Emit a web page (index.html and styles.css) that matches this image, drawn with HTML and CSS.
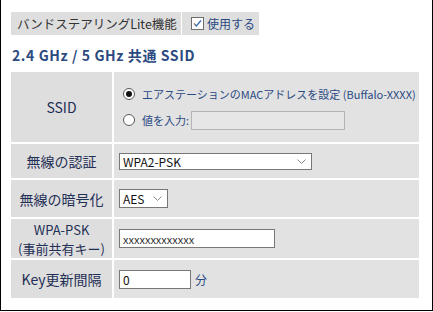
FILE: index.html
```html
<!DOCTYPE html>
<html lang="ja">
<head>
<meta charset="utf-8">
<link rel="stylesheet" href="styles.css">
</head>
<body>
<div class="frame">
  <div class="toggle-row">
    <div class="feature">バンドステアリングLite機能</div>
    <div class="use">
      <svg class="check" width="13" height="13" viewBox="0 0 13 13"><rect x="0.5" y="0.5" width="12" height="12" fill="#fff" stroke="#6e6e6e"/><path d="M3 6.5 L5.3 9 L10 3.5" fill="none" stroke="#3a6db5" stroke-width="1.3"/><path d="M3 6.5 L4 7.6" fill="none" stroke="#e0904a" stroke-width="1.3"/></svg>
      <span>使用する</span>
    </div>
  </div>
  <h2 class="title">2.4 GHz / 5 GHz 共通 SSID</h2>
  <div class="grid">
    <div class="lbl r1">SSID</div>
    <div class="val r1 ssid">
      <div class="opt"><span class="radio on"></span><span class="otext">エアステーションのMACアドレスを設定 (Buffalo-XXXX)</span></div>
      <div class="opt"><span class="radio"></span><span class="otext">値を入力:</span><span class="field"></span></div>
    </div>

    <div class="lbl r2">無線の認証</div>
    <div class="val r2"><div class="select wide"><span>WPA2-PSK</span><svg width="9" height="5" viewBox="0 0 9 5"><path d="M0.5 0.5 L4.5 4.5 L8.5 0.5" fill="none" stroke="#8a8a8a"/></svg></div></div>

    <div class="lbl r3">無線の暗号化</div>
    <div class="val r3"><div class="select small"><span>AES</span><svg width="9" height="5" viewBox="0 0 9 5"><path d="M0.5 0.5 L4.5 4.5 L8.5 0.5" fill="none" stroke="#8a8a8a"/></svg></div></div>

    <div class="lbl r4 two"><span class="ln">WPA-PSK</span><span class="ln">(事前共有キー)</span></div>
    <div class="val r4"><div class="input psk">xxxxxxxxxxxxx</div></div>

    <div class="lbl r5">Key更新間隔</div>
    <div class="val r5"><div class="input key">0</div><span class="unit">分</span></div>
  </div>
</div>
</body>
</html>
```

FILE: styles.css
```css
html, body {
  margin: 0;
  padding: 0;
  background: #fff;
}
body {
  font-family: "Noto Sans CJK JP", "Noto Sans", sans-serif;
}
.frame {
  box-sizing: border-box;
  width: 433px;
  height: 311px;
  border-left: 1px solid #000;
  border-right: 1px solid #000;
  border-bottom: 1px solid #000;
  padding: 12px 0 0 10px;
}
.toggle-row {
  display: flex;
  gap: 1px;
  height: 23px;
}
.feature {
  width: 170px;
  background: #dedede;
  color: #333;
  font-size: 12.5px;
  line-height: 23px;
  padding-left: 6px;
  box-sizing: border-box;
  white-space: nowrap;
}
.use {
  width: 77px;
  background: #dedede;
  display: flex;
  align-items: center;
  padding-left: 9px;
  box-sizing: border-box;
  color: #2a4a82;
  font-size: 12px;
  gap: 3px;
}
.check { display: block; }
.title {
  margin: 11px 0 8px 1px;
  font-size: 14px;
  line-height: 18px;
  font-weight: bold;
  letter-spacing: 0.6px;
  color: #2b4a80;
}
.grid {
  display: grid;
  width: 408px;
  grid-template-columns: 101px 305px;
  grid-template-rows: 70px 34px 37px 39px 38px;
  gap: 2px;
}
.lbl {
  background: #dedede;
  color: #1f2f55;
  font-size: 14px;
  display: flex;
  align-items: center;
  justify-content: center;
  text-align: center;
  line-height: 16px;
}
.lbl.two {
  flex-direction: column;
  font-size: 13px;
}
.lbl.two .ln {
  display: block;
  line-height: 19px;
}
.val {
  background: #e2e2e2;
  display: flex;
  align-items: center;
  padding-left: 5px;
}
.ssid {
  flex-direction: column;
  align-items: flex-start;
  justify-content: center;
  gap: 7px;
  padding-left: 9px;
}
.opt {
  display: flex;
  align-items: center;
  height: 19px;
}
.radio {
  box-sizing: border-box;
  width: 12px;
  height: 12px;
  border: 1px solid #5a5a5a;
  border-radius: 50%;
  background: #fff;
  display: flex;
  align-items: center;
  justify-content: center;
  margin-right: 7px;
}
.radio.on::after {
  content: "";
  width: 6px;
  height: 6px;
  border-radius: 50%;
  background: #111;
}
.otext {
  color: #2a4a82;
  font-size: 11px;
  white-space: nowrap;
}
.field {
  box-sizing: border-box;
  width: 154px;
  height: 19px;
  border: 1px solid #b4b4b4;
  background: #e6e6e6;
  margin-left: 2px;
}
.select {
  box-sizing: border-box;
  background: #fff;
  border: 1px solid #777;
  display: flex;
  align-items: center;
  justify-content: space-between;
  padding: 0 5px 0 3px;
  font-size: 12px;
  color: #111;
}
.select svg { display: block; }
.select.wide { width: 193px; height: 17px; }
.select.small { width: 49px; height: 19px; }
.input {
  box-sizing: border-box;
  background: #fff;
  border: 1px solid #777;
  height: 19px;
  display: flex;
  align-items: center;
  padding-left: 3px;
  font-size: 12px;
  color: #111;
}
.input.psk { width: 156px; font-size: 11px; color: #333; }
.input.key { width: 72px; }
.unit {
  color: #2a4a82;
  font-size: 12px;
  margin-left: 4px;
}
```
